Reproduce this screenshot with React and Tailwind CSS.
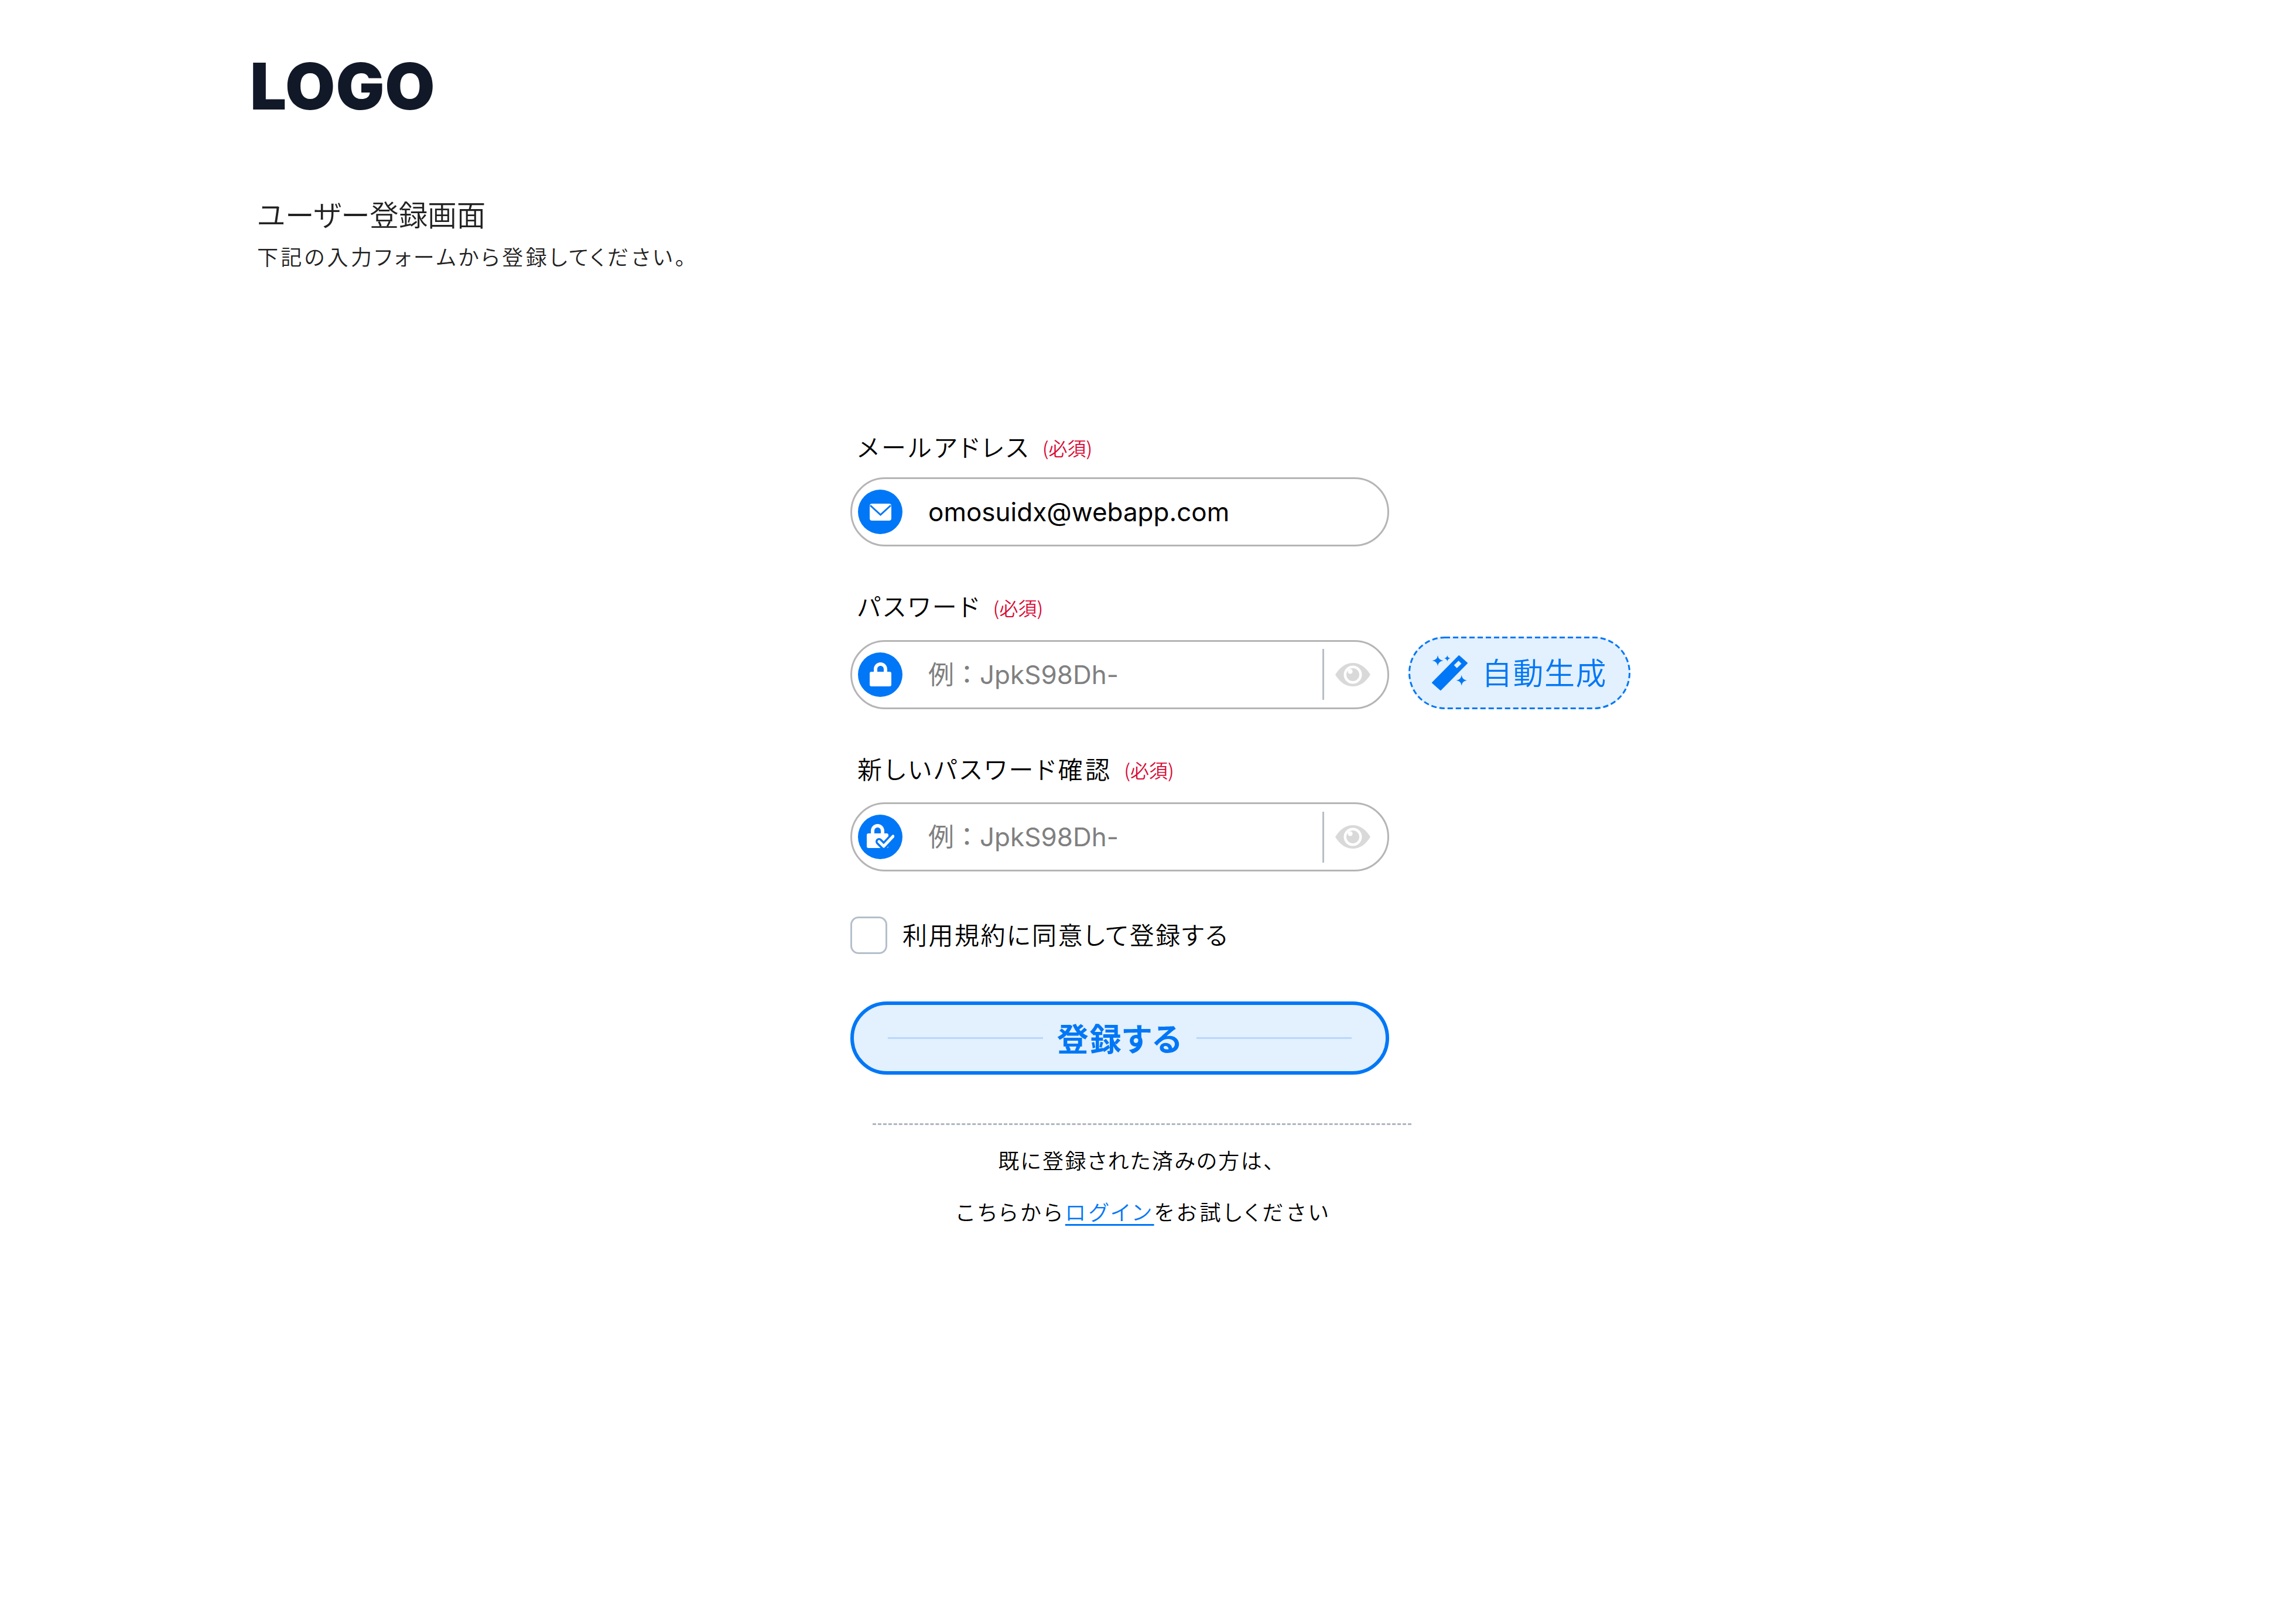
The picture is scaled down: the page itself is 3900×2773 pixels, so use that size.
const jp = "font-['Noto_Sans_CJK_JP',sans-serif] font-[350] [font-feature-settings:'palt']"

function MailIcon() {
  return (
    <svg width="37" height="29" viewBox="0 0 37 29">
      <rect width="37" height="29" rx="4" fill="#fff" />
      <path d="M1 3 L18.500 19 L36 3" fill="none" stroke="#0077f6" strokeWidth="3" />
    </svg>
  )
}

function LockIcon() {
  return (
    <svg width="37" height="41" viewBox="0 0 37 41">
      <path
        fillRule="evenodd"
        fill="#fff"
        d="M18.500 0 C25 0 30 5 30 12 V16 H34 Q37 16 37 19 V38 Q37 41 34 41 H3 Q0 41 0 38 V19 Q0 16 3 16 H7 V12 C7 5 12 0 18.500 0 Z M18.500 6 C15 6 13 8.500 13 12 V16 H24 V12 C24 8.500 22 6 18.500 6 Z"
      />
    </svg>
  )
}

function LockCheckIcon() {
  return (
    <svg width="47" height="44" viewBox="0 0 47 44">
      <path
        fillRule="evenodd"
        fill="#fff"
        d="M18.500 0 C25 0 30 5 30 12 V16 H34 Q37 16 37 19 V38 Q37 41 34 41 H3 Q0 41 0 38 V19 Q0 16 3 16 H7 V12 C7 5 12 0 18.500 0 Z M18.500 6 C15 6 13 8.500 13 12 V16 H24 V12 C24 8.500 22 6 18.500 6 Z"
      />
      <path d="M21 30 L29 38 L45 21" fill="none" stroke="#0077f6" strokeWidth="12" strokeLinecap="round" strokeLinejoin="round" />
      <path d="M21 30 L29 38 L45 21" fill="none" stroke="#fff" strokeWidth="5" strokeLinecap="round" strokeLinejoin="round" />
    </svg>
  )
}

function EyeIcon() {
  return (
    <svg width="60" height="40" viewBox="0 0 60 40">
      <path d="M0 20 C8 7 18 0 30 0 C42 0 52 7 60 20 C52 33 42 40 30 40 C18 40 8 33 0 20 Z" fill="#d9d9d9" />
      <circle cx="30" cy="20" r="15.500" fill="#fff" />
      <circle cx="30" cy="20" r="11" fill="#d9d9d9" />
      <circle cx="25.500" cy="14.500" r="4" fill="#fff" />
    </svg>
  )
}

function WandIcon() {
  return (
    <svg width="61" height="60" viewBox="0 0 61 60" fill="#0077f6">
      <path
        fillRule="evenodd"
        strokeLinejoin="round"
        stroke="#0077f6"
        strokeWidth="2"
        d="M1 46.700 L46.300 1 L60 13.300 L14.800 59 Z M36.300 16.700 L42.600 23.300 L51.900 14.300 L45.600 7.700 Z"
      />
      <path d="M10 0 Q11 8 19.500 9 Q11 10 10 18.500 Q9 10 0.500 9 Q9 8 10 0 Z" />
      <path d="M26.300 0 Q27 4.300 31.800 5 Q27 5.700 26.300 10.500 Q25.600 5.700 20.800 5 Q25.600 4.300 26.300 0 Z" />
      <path d="M50.700 33.700 Q51.700 41.700 59.700 42.700 Q51.700 43.700 50.700 51.700 Q49.700 43.700 41.700 42.700 Q49.700 41.700 50.700 33.700 Z" />
    </svg>
  )
}

function Field({ label, icon, value, placeholder, eye, gapClass }) {
  return (
    <div className={`flex flex-col ${gapClass}`}>
      <div className={`flex items-center gap-[20px] pl-[12px] h-[52px] text-[42px] tracking-[4.500px] text-black ${jp}`}>
        <span>{label}</span>
        <span className="text-[32px] tracking-normal text-[#d90a34] mt-[6px]">(必須)</span>
      </div>
      <div className="w-[920px] h-[118px] rounded-full border-[3px] border-[#b5b5b5] bg-white flex items-center pl-[10px] pr-[11px]">
        <div className="w-[76px] h-[76px] rounded-full bg-[#0077f6] flex items-center justify-center shrink-0">
          {icon}
        </div>
        <input
          readOnly
          value={value}
          placeholder={placeholder}
          className="ml-[44px] flex-1 min-w-0 bg-transparent outline-none text-[44px] text-black placeholder:text-[#808080] font-['Inter','Noto_Sans_CJK_JP',sans-serif]"
        />
        {eye && (
          <div className="flex items-center shrink-0 h-[87px] border-l-[3px] border-[#b8bec6] pl-[19px] pr-[18px] ml-[10px]">
            <EyeIcon />
          </div>
        )}
      </div>
    </div>
  )
}

export default function App() {
  return (
    <div className="w-[3900px] h-[2773px] bg-white overflow-hidden">
      <header className="pl-[427px] pt-[79px]">
        <div className="font-['Inter',sans-serif] font-black text-[110px] tracking-[1px] leading-[136px] text-[#111827]">LOGO</div>
      </header>

      <div className={`pl-[439px] pt-[120px] text-[#222222] ${jp}`}>
        <h1 className="text-[49.500px] leading-[60px] font-[350]">ユーザー登録画面</h1>
        <p className="text-[36px] tracking-[4.300px] leading-[50px] mt-[17px]">下記の入力フォームから登録してください。</p>
      </div>

      <main className="w-[920px] mx-auto mt-[273px]">
        <div className="-ml-[38px] flex flex-col gap-[74.500px]">
          <Field label="メールアドレス" icon={<MailIcon />} value="omosuidx@webapp.com" gapClass="gap-[28px]" />
          <div className="relative">
            <Field label="パスワード" icon={<LockIcon />} placeholder="例：JpkS98Dh-" eye value="" gapClass="gap-[33px]" />
            <button className={`absolute left-[953px] bottom-0 w-[379px] h-[124px] rounded-full bg-[#e3f0fd] flex items-center justify-center gap-[24px] text-[52px] tracking-[1.500px] text-[#0077f6] ${jp}`}>
              <svg className="absolute inset-0" width="379" height="124" viewBox="0 0 379 124">
                <rect x="1.500" y="1.500" width="376" height="121" rx="60.500" fill="none" stroke="#0077f6" strokeWidth="3" strokeDasharray="9 5" />
              </svg>
              <WandIcon />
              <span className="-mt-[3px]">自動生成</span>
            </button>
          </div>
          <Field label="新しいパスワード確認" icon={<LockCheckIcon />} placeholder="例：JpkS98Dh-" eye value="" gapClass="gap-[33px]" />
        </div>

        <label className="-ml-[38px] mt-[77px] flex items-center gap-[26px]">
          <span className="w-[63px] h-[64px] rounded-[14px] border-[3px] border-[#b5bfcb] bg-white" />
          <span className={`text-[42px] tracking-[2.500px] text-black -mt-[6px] ${jp}`}>利用規約に同意して登録する</span>
        </label>

        <button className="-ml-[38px] mt-[81px] w-[920px] h-[125px] rounded-full border-[6px] border-[#0077f6] bg-[#e3f0fd] flex items-center justify-center gap-[24px] px-[58px]">
          <span className="flex-1 h-[3px] bg-[#b8d8fd]" />
          <span className="text-[54px] tracking-[2px] font-bold text-[#0077f6] -mt-[3px] font-['Noto_Sans_CJK_JP',sans-serif] [font-feature-settings:'palt']">登録する</span>
          <span className="flex-1 h-[3px] bg-[#b8d8fd]" />
        </button>

        <div className={`mt-[83px] border-t-[3px] border-dashed border-[#aeb6c0] pt-[15px] text-center text-[36px] leading-[88px] text-black ${jp}`}>
          <p className="tracking-[2.500px] pr-[18px]">既に登録された済みの方は、</p>
          <p className="tracking-[5.100px] pl-[6px]">
            こちらから<a className="text-[#0077f6] underline underline-offset-[6px]">ログイン</a>をお試しください
          </p>
        </div>
      </main>
    </div>
  )
}
